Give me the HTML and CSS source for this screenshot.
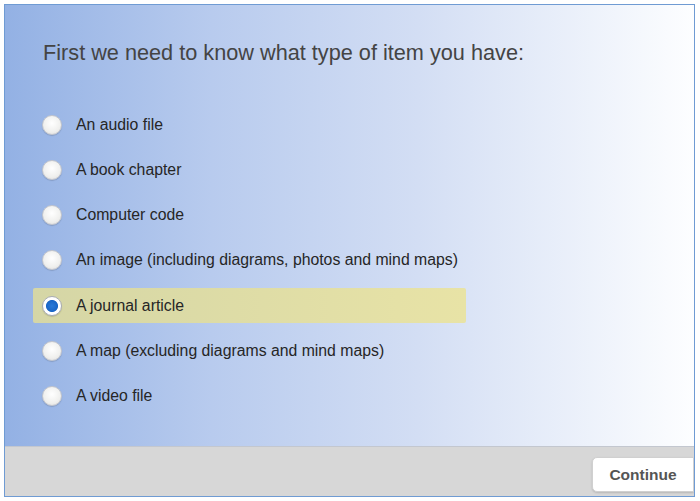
FILE: index.html
```html
<!DOCTYPE html>
<html lang="en">
<head>
    <meta charset="UTF-8">
    <title>Item type</title>
    <link rel="stylesheet" href="styles.css">
</head>
<body>
    <div class="frame">
        <div class="panel">
            <h2 class="question">First we need to know what type of item you have:</h2>
            <div class="options">
                <label class="option"><span class="radio"></span>An audio file</label>
                <label class="option"><span class="radio"></span>A book chapter</label>
                <label class="option"><span class="radio"></span>Computer code</label>
                <label class="option"><span class="radio"></span>An image (including diagrams, photos and mind maps)</label>
                <label class="option selected"><span class="radio"></span>A journal article</label>
                <label class="option"><span class="radio"></span>A map (excluding diagrams and mind maps)</label>
                <label class="option"><span class="radio"></span>A video file</label>
            </div>
        </div>
        <div class="footer">
            <button class="continue">Continue</button>
        </div>
    </div>
</body>
</html>
```

FILE: styles.css
```css
body {
    margin: 0;
    font-family: "Liberation Sans", Arial, sans-serif;
    background: #fff;
}
.frame {
    margin: 4px 0 0 4px;
    width: 689px;
    height: 491px;
    border: 1px solid #6f9bd3;
    box-shadow: inset 0 0 0 1px #9dbbe3;
    display: flex;
    flex-direction: column;
    overflow: hidden;
}
.panel {
    flex: 1;
    background: linear-gradient(to right, #93b1e4 0%, #b8cbee 30%, #d3def4 60%, #fdfeff 100%);
    padding: 35px 0 0 28px;
}
.question {
    margin: 0 0 41px 10px;
    font-size: 21.7px;
    font-weight: normal;
    color: #444;
}
.options {
    display: flex;
    flex-direction: column;
    gap: 10.3px;
}
.option {
    display: flex;
    align-items: center;
    width: 424px;
    height: 35px;
    padding-left: 9px;
    font-size: 15.8px;
    color: #262626;
    border-radius: 2px;
}
.option.selected {
    background: linear-gradient(to right, #d5d6a6, #e8e3a6);
}
.radio {
    width: 18px;
    height: 18px;
    border-radius: 50%;
    margin-right: 14px;
    background: radial-gradient(circle at 50% 40%, #ffffff 0%, #f0f0ee 60%, #dcdcdc 100%);
    border: 1px solid #c4c6cc;
    box-shadow: 0 1px 1px rgba(0, 0, 0, 0.15);
}
.selected .radio {
    background: radial-gradient(circle closest-side, #2a7ad8 0%, #1a66c6 62%, #fff 72%, #fff 100%);
    border-color: #a9adb5;
}
.footer {
    height: 50px;
    background: #d7d7d7;
    border-top: 1px solid #c3c7cf;
    display: flex;
    justify-content: flex-end;
    align-items: flex-start;
    padding-top: 10px;
    box-sizing: border-box;
}
.continue {
    width: 102px;
    height: 35px;
    background: #fff;
    border: 1px solid #d0d0d0;
    border-radius: 5px 0 0 5px;
    font-family: "Liberation Sans", Arial, sans-serif;
    font-size: 15.5px;
    font-weight: bold;
    color: #555;
    box-shadow: 0 1px 2px rgba(0, 0, 0, 0.15);
}
```
